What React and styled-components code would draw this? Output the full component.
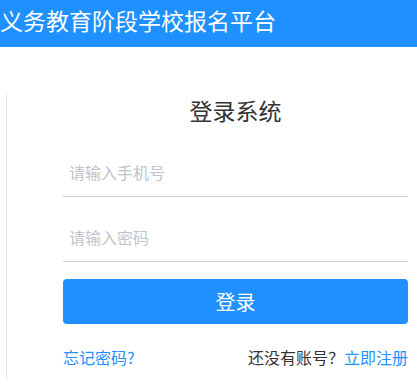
import styled, { createGlobalStyle } from "styled-components";

const GlobalStyle = createGlobalStyle`
  body {
    margin: 0;
    background: #fff;
    font-family: "Noto Sans CJK SC", "Liberation Sans", sans-serif;
  }
`;

const Header = styled.header`
  height: 47px;
  background-color: #1e90ff;
  display: flex;
  align-items: center;
`;

const HeaderTitle = styled.h1`
  margin: -8px 0 0;
  color: #fff;
  font-size: 23px;
  font-weight: 400;
  line-height: 30px;
`;

const Panel = styled.section`
  margin: 46px 0 0 6px;
  height: 288px;
  border-left: 1px solid #e8e8e8;
`;

const Form = styled.form`
  margin-left: 56px;
  width: 345px;
  display: flex;
  flex-direction: column;
`;

const Title = styled.h2`
  margin: 0;
  padding-top: 2px;
  text-align: center;
  color: #333;
  font-size: 23px;
  font-weight: 400;
  line-height: 30px;
`;

const Input = styled.input`
  box-sizing: border-box;
  height: 46px;
  margin-top: ${(p) => p.$top}px;
  padding: 0 6px 4px;
  border: none;
  border-bottom: 1px solid #cccccc;
  outline: none;
  font-family: inherit;
  font-size: 16px;
  color: #333;

  &::placeholder {
    color: #c0c4cc;
  }
`;

const Button = styled.button`
  margin-top: 17px;
  height: 45px;
  border: none;
  border-radius: 4px;
  background-color: #1e90ff;
  color: #fff;
  font-family: inherit;
  font-size: 20px;
  cursor: pointer;
`;

const Links = styled.div`
  margin-top: 22px;
  display: flex;
  justify-content: space-between;
  font-size: 16px;
  line-height: 22px;
`;

const Link = styled.a`
  color: #1e90ff;
  text-decoration: none;
  cursor: pointer;
`;

const Hint = styled.span`
  color: #333;
`;

export default function App() {
  return (
    <>
      <GlobalStyle />
      <Header>
        <HeaderTitle>义务教育阶段学校报名平台</HeaderTitle>
      </Header>
      <Panel>
        <Form onSubmit={(e) => e.preventDefault()}>
          <Title>登录系统</Title>
          <Input $top={26} type="text" placeholder="请输入手机号" />
          <Input $top={19} type="password" placeholder="请输入密码" />
          <Button type="submit">登录</Button>
          <Links>
            <Link>忘记密码?</Link>
            <Hint>
              还没有账号？<Link>立即注册</Link>
            </Hint>
          </Links>
        </Form>
      </Panel>
    </>
  );
}
